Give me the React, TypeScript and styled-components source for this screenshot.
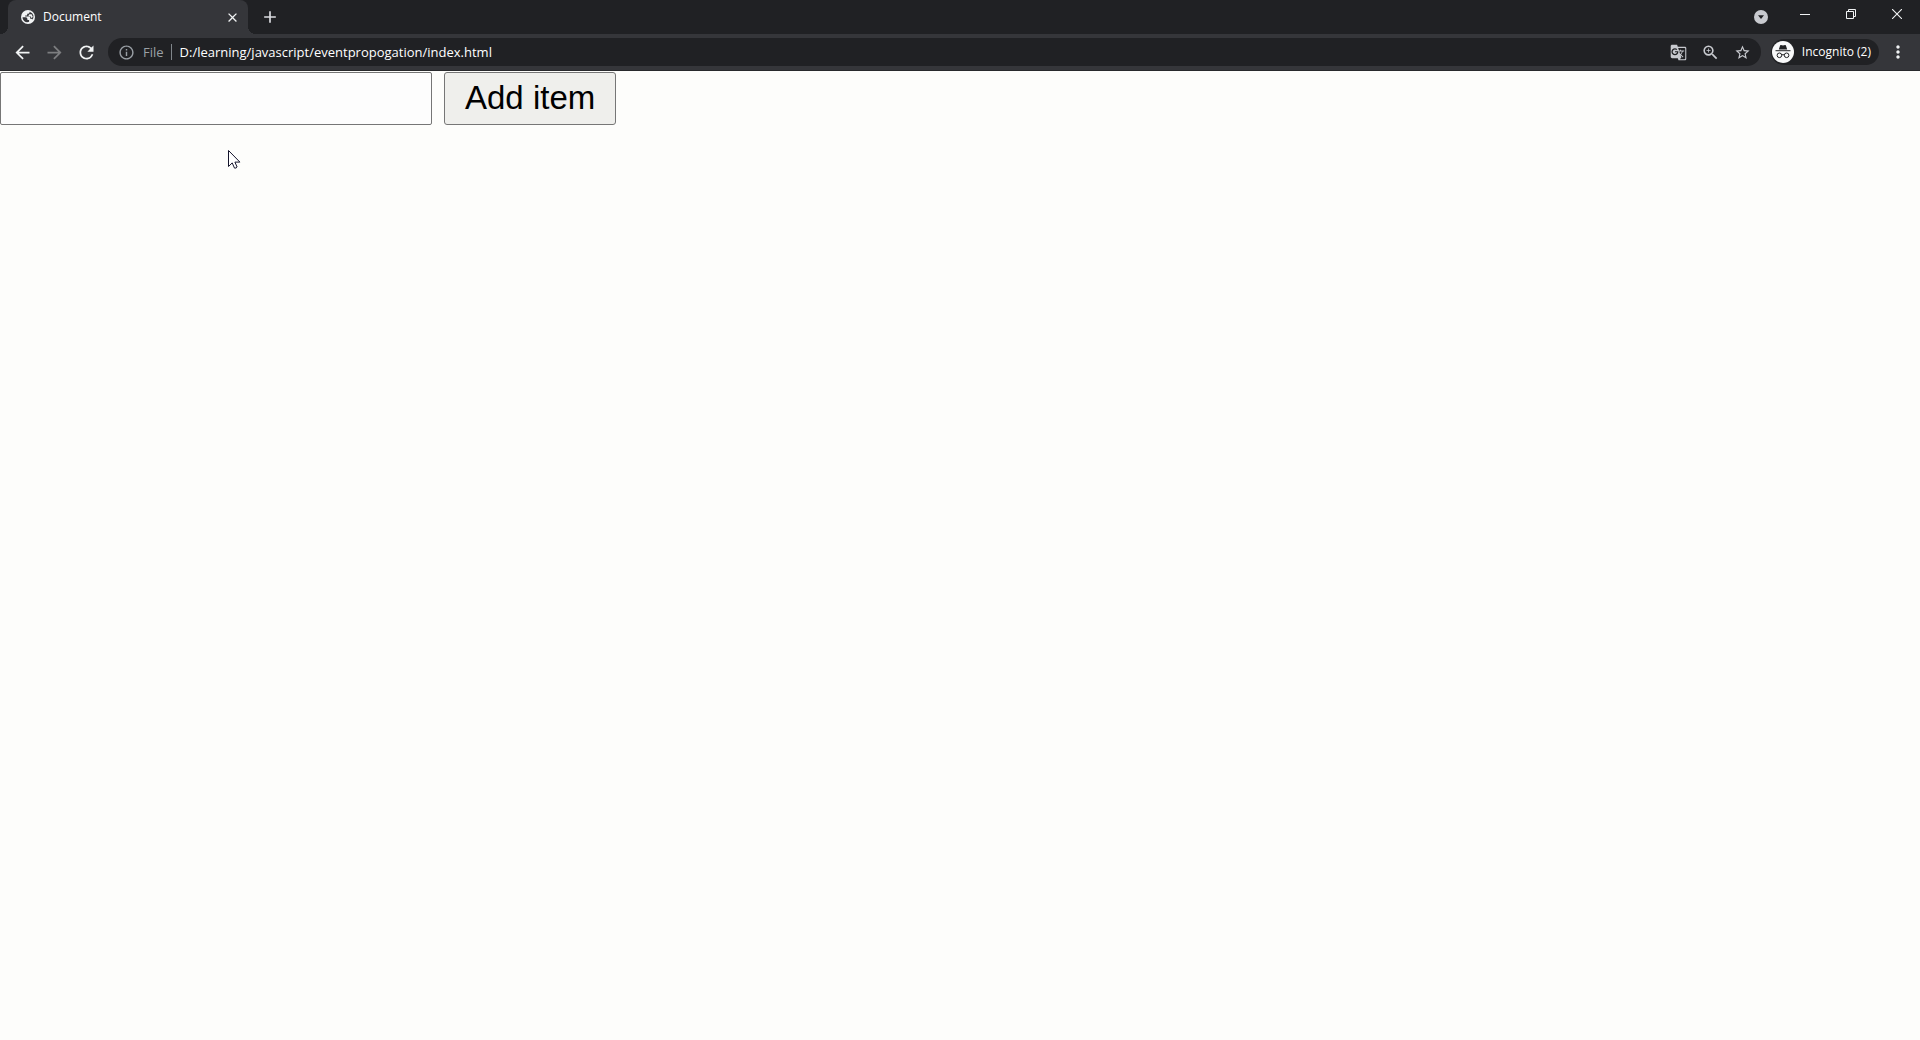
import React from "react";
import styled, { createGlobalStyle } from "styled-components";
import {
  MdArrowBack,
  MdArrowForward,
  MdRefresh,
  MdInfoOutline,
  MdGTranslate,
  MdZoomIn,
  MdStarBorder,
  MdMoreVert,
  MdClose,
  MdAdd,
} from "react-icons/md";

const GlobalStyle = createGlobalStyle`
  *, *::before, *::after { box-sizing: border-box; }
  body { margin: 0; background: #fdfdfb; }
  button, input { font: inherit; margin: 0; }
`;

const Window = styled.div`
  display: flex;
  flex-direction: column;
  min-height: 100vh;
  font-family: "Open Sans", "Noto Sans", sans-serif;
  font-size: 12px;
  line-height: 16px;
  color: #fff;
`;

const TabStrip = styled.header`
  display: flex;
  align-items: stretch;
  height: 34px;
  padding-left: 8px;
  background: #202124;
`;

const Tab = styled.div`
  position: relative;
  display: flex;
  align-items: center;
  gap: 8px;
  width: 240px;
  padding: 0 8px 0 13px;
  background: #35363a;
  border-radius: 8px 8px 0 0;

  &::before,
  &::after {
    content: "";
    position: absolute;
    bottom: 0;
    width: 8px;
    height: 8px;
  }
  &::before {
    right: 100%;
    background: radial-gradient(circle at 0 0, transparent 8px, #35363a 8px);
  }
  &::after {
    left: 100%;
    background: radial-gradient(circle at 100% 0, transparent 8px, #35363a 8px);
  }
`;

const TabTitle = styled.span`
  flex: 1;
`;

const Spacer = styled.div`
  flex: 1;
`;

const IconButton = styled.button<{ $width?: number; $color?: string }>`
  display: flex;
  align-items: center;
  justify-content: center;
  width: ${({ $width }) => $width ?? 32}px;
  padding: 0;
  border: 0;
  background: none;
  color: ${({ $color }) => $color ?? "#f1f3f4"};
`;

const NewTabButton = styled(IconButton)`
  margin-left: 8px;
`;

const WindowControls = styled.div`
  display: flex;
  height: 28px;
`;

const Toolbar = styled.nav`
  display: flex;
  align-items: center;
  height: 37px;
  padding: 0 6px;
  background: #35363a;
  border-bottom: 1px solid #28292c;
`;

const AddressBar = styled.div`
  display: flex;
  flex: 1;
  align-items: center;
  height: 28px;
  margin: 0 10px 0 6px;
  padding: 0 2px 0 10px;
  background: #202124;
  border-radius: 14px;
`;

const SiteInfo = styled.button`
  display: flex;
  align-items: center;
  gap: 8px;
  height: 16px;
  padding: 0 7px 0 0;
  border: 0;
  border-right: 1px solid #80868b;
  background: none;
  color: #9aa0a6;
  font-size: 13px;
`;

const Url = styled.input`
  flex: 1;
  min-width: 0;
  padding: 0 8px;
  border: 0;
  outline: 0;
  background: none;
  color: #fff;
  font-size: 13px;
`;

const Profile = styled.button`
  display: flex;
  align-items: center;
  gap: 8px;
  height: 26px;
  margin-right: 3px;
  padding: 0 8px 0 1px;
  border: 0;
  border-radius: 13px;
  background: #202124;
  color: #fff;
`;

const Page = styled.main`
  flex: 1;
  position: relative;
  padding-top: 1px;
  background: #fdfdfb;
  color: #000;
  font-family: "Liberation Sans", Arial, sans-serif;
  font-size: 33px;
  line-height: 38px;
`;

const ItemForm = styled.form`
  display: flex;
  gap: 12px;
`;

const ItemInput = styled.input`
  width: 432px;
  height: 53px;
  padding: 0 4px;
  border: 1px solid #767676;
  border-radius: 2px;
  background: #fdfdfd;
`;

const AddButton = styled.button`
  height: 53px;
  padding: 0 20px 2px;
  border: 1px solid #767676;
  border-radius: 3px;
  background: #efefec;
  color: #000;
`;

const Pointer = styled.svg`
  position: absolute;
  left: 228px;
  top: 79px;
`;

function GlobeIcon() {
  return (
    <svg width="14" height="14" viewBox="0 0 14 14" aria-hidden="true">
      <circle cx="7" cy="7" r="7" fill="#f1f3f4" />
      <path
        d="M1.5 7.2h3.3q1.6.1 1.6 1.7v1h1.7v1.9q-2.8 1.1-5-.8-1.7-1.5-1.6-3.8z"
        fill="#35363a"
      />
      <path
        d="M8.6 1.7v.6q0 1.4-1.4 1.4h-1v1.2q0 .7-.8.7H4.2v1h4.3q.7 0 .7.8v1.4h.9q.9 0 1.3.8 1.4-1.8 1-4.1-.6-2.7-3.8-3.8z"
        fill="#35363a"
      />
      <path d="M8.4 4.2h2.2l1.2 2.6-1.1 1.4-1.3-1.9H7.2z" fill="#f1f3f4" />
    </svg>
  );
}

function IncognitoIcon() {
  return (
    <svg width="22" height="22" viewBox="0 0 22 22" aria-hidden="true">
      <circle cx="11" cy="11" r="11" fill="#f8f9fa" />
      <path d="M6.8 8.5 8.1 4.6q.2-.7.9-.5l2 .5 2-.5q.7-.2.9.5l1.3 3.9z" fill="#202124" />
      <path d="M3.5 9.2h15v1h-15z" fill="#202124" />
      <g fill="none" stroke="#202124" strokeWidth="1">
        <circle cx="7.4" cy="14.3" r="2.3" />
        <circle cx="14.6" cy="14.3" r="2.3" />
        <path d="M9.7 14q1.3-.8 2.6 0" />
      </g>
    </svg>
  );
}

export default function App() {
  return (
    <>
      <GlobalStyle />
      <Window>
        <TabStrip>
          <Tab>
            <GlobeIcon />
            <TabTitle>Document</TabTitle>
            <IconButton $width={16} aria-label="Close tab">
              <MdClose size={15} />
            </IconButton>
          </Tab>
          <NewTabButton $width={28} $color="#dadce0" aria-label="New tab">
            <MdAdd size={20} />
          </NewTabButton>
          <Spacer />
          <IconButton $color="#c8cacf" $width={42} aria-label="Search tabs">
            <svg width="14" height="14" viewBox="0 0 14 14">
              <circle cx="7" cy="7" r="7" fill="currentColor" />
              <path d="M4 5.3h6L7 9z" fill="#202124" />
            </svg>
          </IconButton>
          <WindowControls>
            <IconButton $width={46} aria-label="Minimize">
              <svg width="10" height="10" viewBox="0 0 10 10">
                <path d="M0 5.5h10" stroke="currentColor" />
              </svg>
            </IconButton>
            <IconButton $width={46} aria-label="Restore">
              <svg width="10" height="10" viewBox="0 0 10 10" fill="none" stroke="currentColor">
                <path d="M.5 2.5h7v7h-7zM2.5 2.5v-2h7v7h-2" />
              </svg>
            </IconButton>
            <IconButton $width={46} aria-label="Close">
              <svg width="10" height="10" viewBox="0 0 10 10">
                <path d="m0 0 10 10M10 0 0 10" stroke="currentColor" strokeWidth="1.1" />
              </svg>
            </IconButton>
          </WindowControls>
        </TabStrip>
        <Toolbar>
          <IconButton aria-label="Back">
            <MdArrowBack size={21} />
          </IconButton>
          <IconButton $color="#7d7e80" aria-label="Forward">
            <MdArrowForward size={21} />
          </IconButton>
          <IconButton aria-label="Reload">
            <MdRefresh size={21} />
          </IconButton>
          <AddressBar>
            <SiteInfo>
              <MdInfoOutline size={17} />
              File
            </SiteInfo>
            <Url aria-label="Address" defaultValue="D:/learning/javascript/eventpropogation/index.html" />
            <IconButton $color="#c8cacf" aria-label="Translate this page">
              <MdGTranslate size={17} />
            </IconButton>
            <IconButton $color="#c8cacf" aria-label="Zoom">
              <MdZoomIn size={19} />
            </IconButton>
            <IconButton $color="#c8cacf" aria-label="Bookmark this page">
              <MdStarBorder size={17} />
            </IconButton>
          </AddressBar>
          <Profile>
            <IncognitoIcon />
            Incognito (2)
          </Profile>
          <IconButton aria-label="Menu">
            <MdMoreVert size={20} />
          </IconButton>
        </Toolbar>
        <Page>
          <ItemForm onSubmit={(event) => event.preventDefault()}>
            <ItemInput aria-label="Item" />
            <AddButton type="submit">Add item</AddButton>
          </ItemForm>
          <Pointer width="13" height="20" viewBox="0 0 13 20" aria-hidden="true">
            <path
              d="M.5.5v16l3.7-3.6 2.3 5.2q1.8.4 2.6-1.1l-2.2-4.9h5z"
              fill="#fff"
              stroke="#14142b"
            />
          </Pointer>
        </Page>
      </Window>
    </>
  );
}
